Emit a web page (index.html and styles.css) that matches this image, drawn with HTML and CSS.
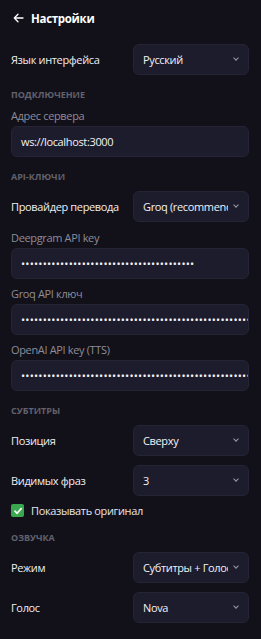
FILE: index.html
```html
<!DOCTYPE html>
<html lang="ru">
<head>
    <meta charset="UTF-8">
    <title>Настройки</title>
    <link rel="stylesheet" href="styles.css">
</head>
<body>
    <div class="page">
        <header class="top">
            <svg class="back" width="11" height="10" viewBox="0 0 11 10">
                <path d="M10 5H1.3M5 1.2 1.3 5 5 8.8" fill="none" stroke="#fff" stroke-width="1.3" stroke-linecap="round" stroke-linejoin="round"/>
            </svg>
            <h1>Настройки</h1>
        </header>

        <div class="row first">
            <span class="label">Язык интерфейса</span>
            <div class="select"><span>Русский</span><i class="chev"></i></div>
        </div>

        <h2>Подключение</h2>
        <div class="field-label">Адрес сервера</div>
        <div class="input">ws://localhost:3000</div>

        <h2>API-ключи</h2>
        <div class="row">
            <span class="label">Провайдер перевода</span>
            <div class="select"><span>Groq (recommended)</span><i class="chev"></i></div>
        </div>
        <div class="field-label">Deepgram API key</div>
        <div class="input dots">••••••••••••••••••••••••••••••••••••••••</div>
        <div class="field-label">Groq API ключ</div>
        <div class="input dots">••••••••••••••••••••••••••••••••••••••••••••••••••••••••</div>
        <div class="field-label">OpenAI API key (TTS)</div>
        <div class="input dots">••••••••••••••••••••••••••••••••••••••••••••••••••••••••</div>

        <h2>Субтитры</h2>
        <div class="row">
            <span class="label">Позиция</span>
            <div class="select"><span>Сверху</span><i class="chev"></i></div>
        </div>
        <div class="row">
            <span class="label">Видимых фраз</span>
            <div class="select"><span>3</span><i class="chev"></i></div>
        </div>
        <label class="check">
            <span class="box">
                <svg width="10" height="10" viewBox="0 0 10 10"><path d="M2 5.2 4.1 7.3 8.2 2.6" fill="none" stroke="#fff" stroke-width="1.7" stroke-linecap="round" stroke-linejoin="round"/></svg>
            </span>
            Показывать оригинал
        </label>

        <h2>Озвучка</h2>
        <div class="row">
            <span class="label">Режим</span>
            <div class="select"><span>Субтитры + Голос</span><i class="chev"></i></div>
        </div>
        <div class="row">
            <span class="label">Голос</span>
            <div class="select"><span>Nova</span><i class="chev"></i></div>
        </div>
    </div>
</body>
</html>
```

FILE: styles.css
```css
body{
    margin: 0;
    background: #121119;
    color: #ececf2;
    font-family: "Open Sans", "Noto Sans", sans-serif;
    font-size: 11px;
    letter-spacing: -0.35px;
}
.page{
    padding: 0 12px 0 11px;
}
.top{
    display: flex;
    align-items: center;
    height: 36px;
    padding-left: 2px;
}
.back{
    margin-right: 7px;
}
.top h1{
    margin: 0;
    font-size: 11.5px;
    font-weight: 700;
    letter-spacing: -0.3px;
    color: #fff;
}
.row{
    display: flex;
    align-items: center;
    justify-content: space-between;
    margin-top: 9px;
}
.row.first{
    margin-top: 8px;
}
h2 + .row{
    margin-top: 8px;
}
.label{
    color: #eeeef3;
}
.select, .input{
    box-sizing: border-box;
    background: #1d1c2c;
    border: 1px solid #252436;
    border-radius: 6px;
    height: 31px;
    display: flex;
    align-items: center;
    color: #f2f2f6;
    overflow: hidden;
    white-space: nowrap;
}
.select{
    width: 116px;
    padding: 0 10px 0 9px;
}
.select span{
    flex: 1;
    overflow: hidden;
}
.chev{
    flex: none;
    width: 3px;
    height: 3px;
    border-right: 1px solid #9a99a8;
    border-bottom: 1px solid #9a99a8;
    transform: rotate(45deg);
    margin: -3px 0 0 6px;
}
.input{
    width: 100%;
    padding: 0 9px;
}
.dots{
    font-size: 11px;
    letter-spacing: 0.2px;
}
h2{
    margin: 13px 0 0;
    font-size: 9px;
    font-weight: 700;
    text-transform: uppercase;
    letter-spacing: 0;
    color: #62616e;
    line-height: 13px;
}
.field-label{
    margin: 7px 0 3px;
    color: #8d8c99;
    line-height: 15px;
}
h2 + .field-label{
    margin-top: 7px;
}
.row + .field-label{
    margin-top: 8px;
}
.check{
    display: flex;
    align-items: center;
    margin-top: 7px;
    color: #e6e6ec;
}
.box{
    width: 13px;
    height: 13px;
    border-radius: 2px;
    background: #3aa84f;
    display: flex;
    align-items: center;
    justify-content: center;
    margin-right: 7px;
}
```
